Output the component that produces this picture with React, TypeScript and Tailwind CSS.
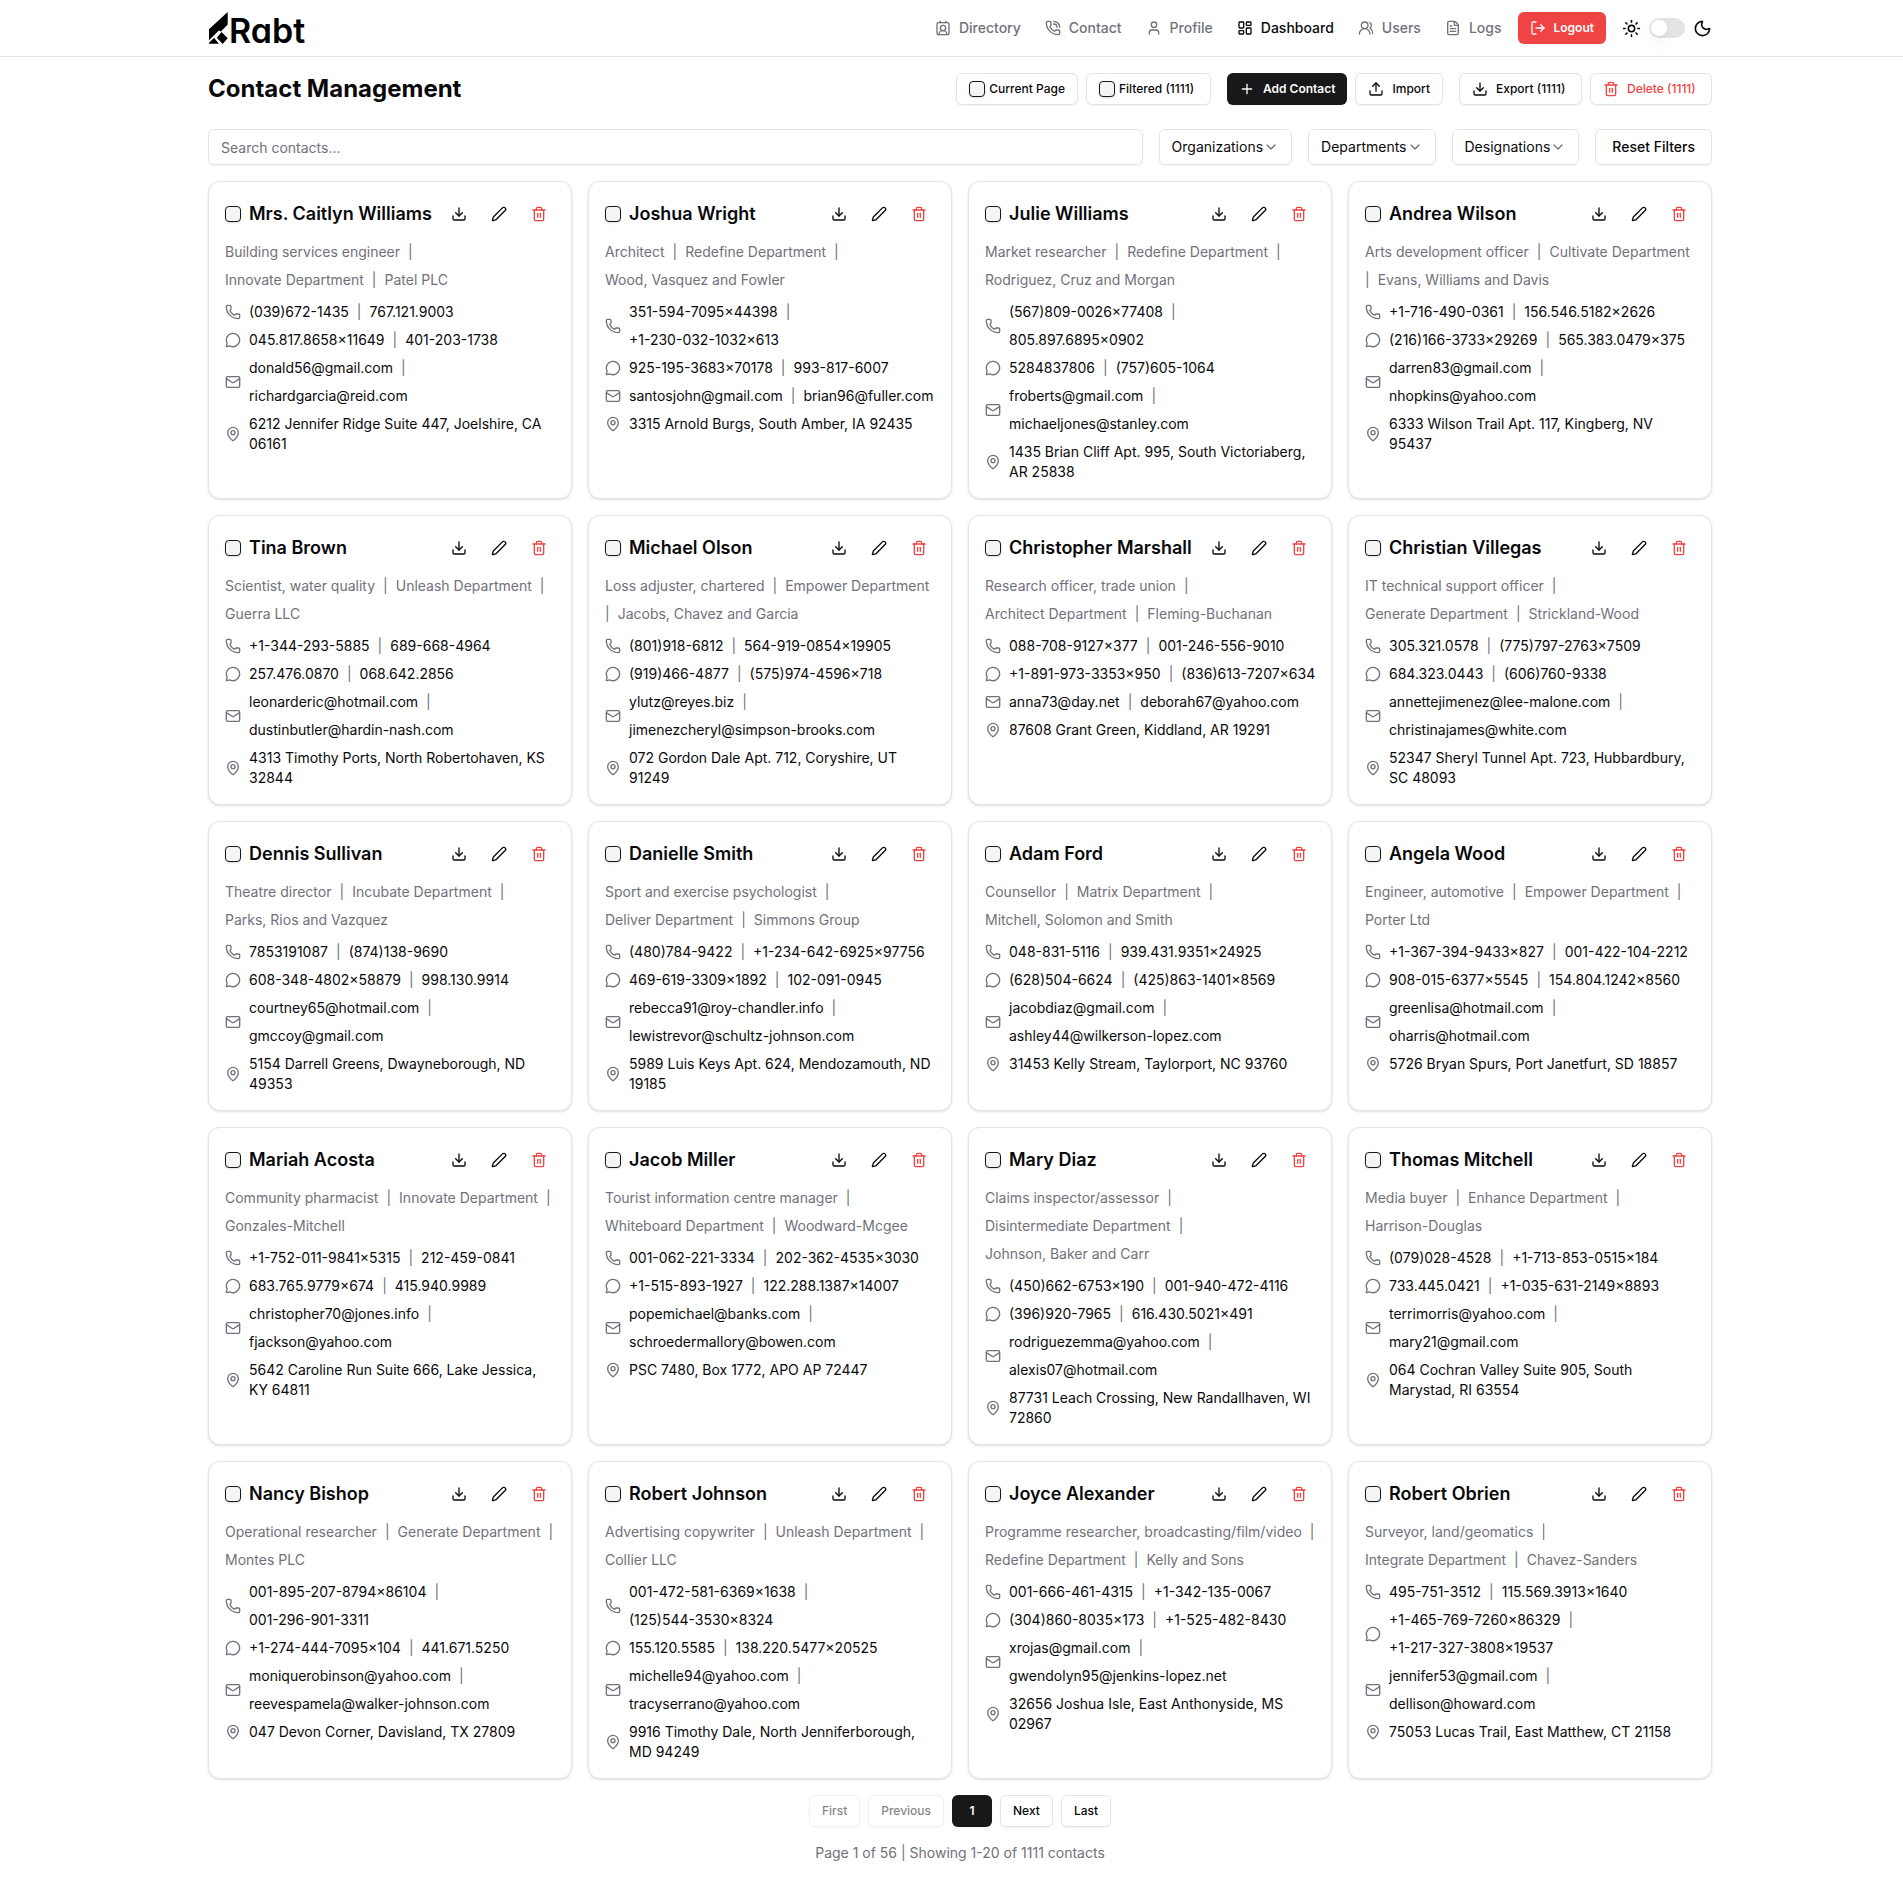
import type { ReactNode } from "react";
import {
  ChevronDown,
  ContactRound,
  Download,
  FileText,
  LayoutDashboard,
  LogOut,
  Mail,
  MapPin,
  MessageCircle,
  Moon,
  Pen,
  Phone,
  PhoneCall,
  Plus,
  Sun,
  Trash2,
  Upload,
  User,
  UsersRound,
} from "lucide-react";

type Contact = {
  name: string;
  role: string[];
  phones: string[];
  chats: string[];
  emails: string[];
  address: string;
};

const c = (
  name: string,
  role: string[],
  phones: string[],
  chats: string[],
  emails: string[],
  address: string,
): Contact => ({ name, role, phones, chats, emails, address });

const contacts: Contact[] = [
  c("Mrs. Caitlyn Williams", ["Building services engineer", "Innovate Department", "Patel PLC"], ["(039)672-1435", "767.121.9003"], ["045.817.8658x11649", "401-203-1738"], ["donald56@gmail.com", "richardgarcia@reid.com"], "6212 Jennifer Ridge Suite 447, Joelshire, CA 06161"),
  c("Joshua Wright", ["Architect", "Redefine Department", "Wood, Vasquez and Fowler"], ["351-594-7095x44398", "+1-230-032-1032x613"], ["925-195-3683x70178", "993-817-6007"], ["santosjohn@gmail.com", "brian96@fuller.com"], "3315 Arnold Burgs, South Amber, IA 92435"),
  c("Julie Williams", ["Market researcher", "Redefine Department", "Rodriguez, Cruz and Morgan"], ["(567)809-0026x77408", "805.897.6895x0902"], ["5284837806", "(757)605-1064"], ["froberts@gmail.com", "michaeljones@stanley.com"], "1435 Brian Cliff Apt. 995, South Victoriaberg, AR 25838"),
  c("Andrea Wilson", ["Arts development officer", "Cultivate Department", "Evans, Williams and Davis"], ["+1-716-490-0361", "156.546.5182x2626"], ["(216)166-3733x29269", "565.383.0479x375"], ["darren83@gmail.com", "nhopkins@yahoo.com"], "6333 Wilson Trail Apt. 117, Kingberg, NV 95437"),
  c("Tina Brown", ["Scientist, water quality", "Unleash Department", "Guerra LLC"], ["+1-344-293-5885", "689-668-4964"], ["257.476.0870", "068.642.2856"], ["leonarderic@hotmail.com", "dustinbutler@hardin-nash.com"], "4313 Timothy Ports, North Robertohaven, KS 32844"),
  c("Michael Olson", ["Loss adjuster, chartered", "Empower Department", "Jacobs, Chavez and Garcia"], ["(801)918-6812", "564-919-0854x19905"], ["(919)466-4877", "(575)974-4596x718"], ["ylutz@reyes.biz", "jimenezcheryl@simpson-brooks.com"], "072 Gordon Dale Apt. 712, Coryshire, UT 91249"),
  c("Christopher Marshall", ["Research officer, trade union", "Architect Department", "Fleming-Buchanan"], ["088-708-9127x377", "001-246-556-9010"], ["+1-891-973-3353x950", "(836)613-7207x634"], ["anna73@day.net", "deborah67@yahoo.com"], "87608 Grant Green, Kiddland, AR 19291"),
  c("Christian Villegas", ["IT technical support officer", "Generate Department", "Strickland-Wood"], ["305.321.0578", "(775)797-2763x7509"], ["684.323.0443", "(606)760-9338"], ["annettejimenez@lee-malone.com", "christinajames@white.com"], "52347 Sheryl Tunnel Apt. 723, Hubbardbury, SC 48093"),
  c("Dennis Sullivan", ["Theatre director", "Incubate Department", "Parks, Rios and Vazquez"], ["7853191087", "(874)138-9690"], ["608-348-4802x58879", "998.130.9914"], ["courtney65@hotmail.com", "gmccoy@gmail.com"], "5154 Darrell Greens, Dwayneborough, ND 49353"),
  c("Danielle Smith", ["Sport and exercise psychologist", "Deliver Department", "Simmons Group"], ["(480)784-9422", "+1-234-642-6925x97756"], ["469-619-3309x1892", "102-091-0945"], ["rebecca91@roy-chandler.info", "lewistrevor@schultz-johnson.com"], "5989 Luis Keys Apt. 624, Mendozamouth, ND 19185"),
  c("Adam Ford", ["Counsellor", "Matrix Department", "Mitchell, Solomon and Smith"], ["048-831-5116", "939.431.9351x24925"], ["(628)504-6624", "(425)863-1401x8569"], ["jacobdiaz@gmail.com", "ashley44@wilkerson-lopez.com"], "31453 Kelly Stream, Taylorport, NC 93760"),
  c("Angela Wood", ["Engineer, automotive", "Empower Department", "Porter Ltd"], ["+1-367-394-9433x827", "001-422-104-2212"], ["908-015-6377x5545", "154.804.1242x8560"], ["greenlisa@hotmail.com", "oharris@hotmail.com"], "5726 Bryan Spurs, Port Janetfurt, SD 18857"),
  c("Mariah Acosta", ["Community pharmacist", "Innovate Department", "Gonzales-Mitchell"], ["+1-752-011-9841x5315", "212-459-0841"], ["683.765.9779x674", "415.940.9989"], ["christopher70@jones.info", "fjackson@yahoo.com"], "5642 Caroline Run Suite 666, Lake Jessica, KY 64811"),
  c("Jacob Miller", ["Tourist information centre manager", "Whiteboard Department", "Woodward-Mcgee"], ["001-062-221-3334", "202-362-4535x3030"], ["+1-515-893-1927", "122.288.1387x14007"], ["popemichael@banks.com", "schroedermallory@bowen.com"], "PSC 7480, Box 1772, APO AP 72447"),
  c("Mary Diaz", ["Claims inspector/assessor", "Disintermediate Department", "Johnson, Baker and Carr"], ["(450)662-6753x190", "001-940-472-4116"], ["(396)920-7965", "616.430.5021x491"], ["rodriguezemma@yahoo.com", "alexis07@hotmail.com"], "87731 Leach Crossing, New Randallhaven, WI 72860"),
  c("Thomas Mitchell", ["Media buyer", "Enhance Department", "Harrison-Douglas"], ["(079)028-4528", "+1-713-853-0515x184"], ["733.445.0421", "+1-035-631-2149x8893"], ["terrimorris@yahoo.com", "mary21@gmail.com"], "064 Cochran Valley Suite 905, South Marystad, RI 63554"),
  c("Nancy Bishop", ["Operational researcher", "Generate Department", "Montes PLC"], ["001-895-207-8794x86104", "001-296-901-3311"], ["+1-274-444-7095x104", "441.671.5250"], ["moniquerobinson@yahoo.com", "reevespamela@walker-johnson.com"], "047 Devon Corner, Davisland, TX 27809"),
  c("Robert Johnson", ["Advertising copywriter", "Unleash Department", "Collier LLC"], ["001-472-581-6369x1638", "(125)544-3530x8324"], ["155.120.5585", "138.220.5477x20525"], ["michelle94@yahoo.com", "tracyserrano@yahoo.com"], "9916 Timothy Dale, North Jenniferborough, MD 94249"),
  c("Joyce Alexander", ["Programme researcher, broadcasting/film/video", "Redefine Department", "Kelly and Sons"], ["001-666-461-4315", "+1-342-135-0067"], ["(304)860-8035x173", "+1-525-482-8430"], ["xrojas@gmail.com", "gwendolyn95@jenkins-lopez.net"], "32656 Joshua Isle, East Anthonyside, MS 02967"),
  c("Robert Obrien", ["Surveyor, land/geomatics", "Integrate Department", "Chavez-Sanders"], ["495-751-3512", "115.569.3913x1640"], ["+1-465-769-7260x86329", "+1-217-327-3808x19537"], ["jennifer53@gmail.com", "dellison@howard.com"], "75053 Lucas Trail, East Matthew, CT 21158"),
];

const navItems = [
  { label: "Directory", icon: ContactRound },
  { label: "Contact", icon: PhoneCall },
  { label: "Profile", icon: User },
  { label: "Dashboard", icon: LayoutDashboard, active: true },
  { label: "Users", icon: UsersRound },
  { label: "Logs", icon: FileText },
];

const checkbox =
  "size-4 shrink-0 appearance-none rounded-sm border border-zinc-900 bg-zinc-100 shadow-sm checked:bg-zinc-900";
const outline =
  "inline-flex items-center justify-center rounded-md border border-zinc-200 bg-white font-medium shadow-xs";

function Logo() {
  return (
    <a href="#" aria-label="Rabt" className="flex items-end gap-px text-black">
      <svg viewBox="-2 0 57 94" className="h-8 w-5" fill="currentColor" aria-hidden="true">
        <path d="M55 0v37L35 57l-6-3L0 83V51z" />
        <path d="M37 59l18 18-15 17-17-18z" />
        <path d="M0 93V90l15-14 14 17z" />
      </svg>
      <span className="text-[34px] leading-[26px] font-semibold [font-feature-settings:'cv11']">
        Rabt
      </span>
    </a>
  );
}

function Header() {
  return (
    <header className="border-b border-zinc-200 pl-[17px]">
      <div className="mx-auto flex h-14 max-w-[1504px] items-center justify-between">
        <Logo />
        <div className="flex items-center gap-4">
          <nav className="flex items-center gap-6 text-sm font-medium text-zinc-500">
            {navItems.map(({ label, icon: Icon, active }) => (
              <a
                key={label}
                href="#"
                aria-current={active ? "page" : undefined}
                className="flex items-center gap-2 aria-[current=page]:text-zinc-950"
              >
                <Icon className="size-4" />
                {label}
              </a>
            ))}
          </nav>
          <button className="flex h-8 items-center gap-2 rounded-md bg-[#ef4444] px-3 text-xs font-semibold text-zinc-50 shadow-xs">
            <LogOut className="size-4" />
            Logout
          </button>
          <div className="flex items-center gap-2">
            <Sun className="size-[19px]" />
            <label className="flex">
              <input type="checkbox" role="switch" aria-label="Dark mode" className="peer sr-only" />
              <span className="flex h-5 w-9 items-center rounded-full bg-zinc-200 px-0.5">
                <span className="size-4 rounded-full bg-white shadow-lg" />
              </span>
            </label>
            <Moon className="size-[19px]" />
          </div>
        </div>
      </div>
    </header>
  );
}

function Toolbar() {
  return (
    <div className="flex flex-wrap items-center justify-between gap-4">
      <h1 className="text-2xl font-bold">Contact Management</h1>
      <div className="flex flex-wrap items-center gap-4 text-xs">
        <div className="flex gap-2">
          <label className={`${outline} h-8 gap-1 px-3`}>
            <input type="checkbox" className={checkbox} />
            Current Page
          </label>
          <label className={`${outline} h-8 min-w-[125px] gap-1 px-3`}>
            <input type="checkbox" className={checkbox} />
            <span className="flex-1">Filtered (1111)</span>
          </label>
        </div>
        <div className="flex gap-2">
          <button className="inline-flex h-8 items-center gap-2 rounded-md bg-zinc-900 px-3 font-semibold text-zinc-50 shadow-xs">
            <Plus className="size-4" />
            Add Contact
          </button>
          <button className={`${outline} h-8 gap-2 px-3`}>
            <Upload className="size-4" />
            Import
          </button>
        </div>
        <div className="flex gap-2">
          <button className={`${outline} h-8 min-w-[123px] gap-2 px-3`}>
            <Download className="size-4" />
            <span className="flex-1 text-left">Export (1111)</span>
          </button>
          <button className={`${outline} h-8 min-w-[122px] gap-2 px-3 text-[#ef4444]`}>
            <Trash2 className="size-4" />
            <span className="flex-1 text-left">Delete (1111)</span>
          </button>
        </div>
      </div>
    </div>
  );
}

function Filters() {
  return (
    <div className="mt-6 flex items-center gap-4 text-sm">
      <input
        type="text"
        aria-label="Search contacts"
        placeholder="Search contacts..."
        className="h-9 min-w-0 flex-1 rounded-md border border-zinc-200 px-3 shadow-xs placeholder:text-zinc-500"
      />
      {["Organizations", "Departments", "Designations"].map((label) => (
        <button
          key={label}
          aria-haspopup="listbox"
          className="inline-flex h-9 items-center rounded-md border border-zinc-200 px-3 shadow-xs"
        >
          {label}
          <ChevronDown className="size-4 text-zinc-500" />
        </button>
      ))}
      <button className={`${outline} h-9 px-4`}>Reset Filters</button>
    </div>
  );
}

function Separated({ items, className }: { items: string[]; className?: string }) {
  return (
    <div className={`flex flex-wrap gap-2 ${className ?? ""}`}>
      {items.flatMap((item, i) => [
        i > 0 ? (
          <span key={`sep-${i}`} className="text-zinc-500">
            |
          </span>
        ) : null,
        <span key={item}>{item}</span>,
      ])}
    </div>
  );
}

function Row({ icon, children }: { icon: ReactNode; children: ReactNode }) {
  return (
    <div className="flex items-center gap-2">
      <span className="shrink-0 text-zinc-500">{icon}</span>
      {children}
    </div>
  );
}

function ContactCard({ contact }: { contact: Contact }) {
  return (
    <article className="rounded-xl border border-zinc-200 bg-white p-4 text-sm shadow-sm">
      <div className="flex items-center justify-between">
        <label className="flex items-center gap-2 text-lg leading-8 font-semibold">
          <input type="checkbox" className={checkbox} />
          {contact.name}
        </label>
        <div className="flex gap-2">
          <button aria-label="Download" className="flex size-8 items-center justify-center">
            <Download className="size-4" />
          </button>
          <button aria-label="Edit" className="flex size-8 items-center justify-center">
            <Pen className="size-4" />
          </button>
          <button aria-label="Delete" className="flex size-8 items-center justify-center text-[#ef4444]">
            <Trash2 className="size-4" />
          </button>
        </div>
      </div>
      <Separated items={contact.role} className="mt-3 text-zinc-500" />
      <div className="mt-3 space-y-2">
        <Row icon={<Phone className="size-4" />}>
          <Separated items={contact.phones} />
        </Row>
        <Row icon={<MessageCircle className="size-4" />}>
          <Separated items={contact.chats} className="-mr-px" />
        </Row>
        <Row icon={<Mail className="size-4" />}>
          <Separated items={contact.emails} />
        </Row>
        <Row icon={<MapPin className="size-4" />}>
          <span>{contact.address}</span>
        </Row>
      </div>
    </article>
  );
}

function Pagination() {
  return (
    <div className="mt-4 flex flex-col items-center gap-4">
      <nav aria-label="Pagination" className="flex gap-2 text-xs">
        <button disabled className={`${outline} h-8 px-3 opacity-50`}>First</button>
        <button disabled className={`${outline} h-8 px-3 opacity-50`}>Previous</button>
        <button aria-current="page" className="h-8 w-10 rounded-md bg-zinc-900 font-semibold text-zinc-50 shadow-xs">
          1
        </button>
        <button className={`${outline} h-8 px-3`}>Next</button>
        <button className={`${outline} h-8 px-3`}>Last</button>
      </nav>
      <p className="text-sm text-zinc-500">Page 1 of 56 | Showing 1-20 of 1111 contacts</p>
    </div>
  );
}

export default function App() {
  return (
    <div className="min-h-screen bg-white font-['Inter',sans-serif] text-zinc-950">
      <Header />
      <main className="py-4 pl-[17px]">
        <div className="mx-auto max-w-[1504px]">
          <Toolbar />
          <Filters />
          <div className="mt-4 grid grid-cols-1 gap-4 md:grid-cols-2 xl:grid-cols-4">
            {contacts.map((contact) => (
              <ContactCard key={contact.name} contact={contact} />
            ))}
          </div>
          <Pagination />
        </div>
      </main>
    </div>
  );
}
